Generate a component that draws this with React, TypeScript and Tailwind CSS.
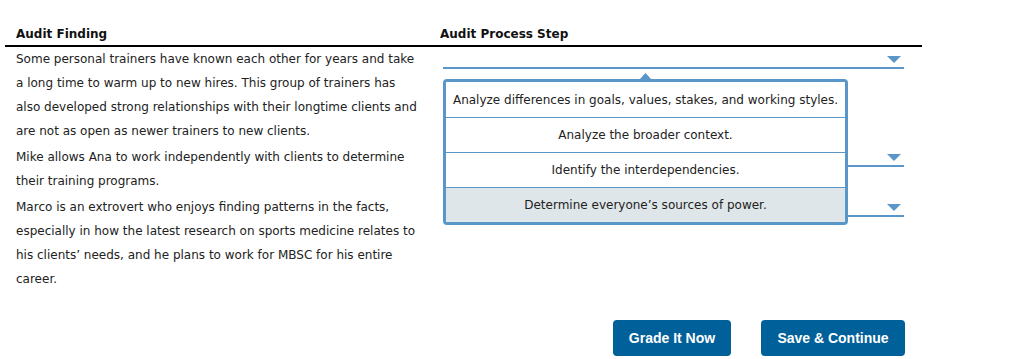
import { useState } from 'react';

const findings = [
  {
    text: 'Some personal trainers have known each other for years and take a long time to warm up to new hires. This group of trainers has also developed strong relationships with their longtime clients and are not as open as newer trainers to new clients.',
  },
  {
    text: 'Mike allows Ana to work independently with clients to determine their training programs.',
  },
  {
    text: 'Marco is an extrovert who enjoys finding patterns in the facts, especially in how the latest research on sports medicine relates to his clients\u2019 needs, and he plans to work for MBSC for his entire career.',
  },
];

const steps = [
  'Analyze differences in goals, values, stakes, and working styles.',
  'Analyze the broader context.',
  'Identify the interdependencies.',
  'Determine everyone\u2019s sources of power.',
];

function Arrow() {
  return (
    <svg width="14" height="7" viewBox="0 0 14 7" className="absolute right-[3px] top-[9px]">
      <polygon points="0,0 14,0 7,7" fill="#5b96c8" />
    </svg>
  );
}

function Dropdown({ open }: { open?: boolean }) {
  return (
    <div className="relative h-[22px] border-b-2 border-[#5b96c8]">
      <Arrow />
      {open && (
        <div className="absolute left-0 top-[32px] z-10 w-[405px]">
          <svg width="13" height="7" viewBox="0 0 13 7" className="absolute left-[196px] top-[-6px]">
            <polygon points="0,7 6.5,0 13,7" fill="#5b96c8" />
          </svg>
          <div className="rounded-[4px] border-[3px] border-[#5b96c8] bg-white">
            {steps.map((s, i) => (
              <div
                key={s}
                className={
                  'flex h-[35px] items-center justify-center text-[12px] text-[#222] ' +
                  (i > 0 ? 'border-t border-[#5b96c8] ' : '') +
                  (i === 3 ? 'bg-[#dfe6e9]' : 'bg-white')
                }
              >
                {s}
              </div>
            ))}
          </div>
        </div>
      )}
    </div>
  );
}

export default function App() {
  const [openRow] = useState(0);

  return (
    <div className="min-h-[359px] bg-white pt-[27px] text-[#222]" style={{ fontFamily: "'DejaVu Sans', Verdana, sans-serif" }}>
      <div className="ml-[5px] w-[917px]">
        <div className="grid grid-cols-[435px_1fr] border-b-2 border-black pb-[3px] text-[12px] font-bold leading-[15px] text-[#111]">
          <div className="pl-[11px]">Audit Finding</div>
          <div>Audit Process Step</div>
        </div>
        <div>
          {findings.map((f, i) => (
            <div key={i} className="mb-[2px] grid grid-cols-[438px_1fr]">
              <div className="pl-[11px] pr-[21px] text-[12px] leading-[24px]">{f.text}</div>
              <div className="pr-[18px]">
                <Dropdown open={openRow === i} />
              </div>
            </div>
          ))}
        </div>
        <div className="mt-[29px] flex justify-end gap-[30px] pr-[17px]" style={{ fontFamily: "'Liberation Sans', Arial, sans-serif" }}>
          <button className="h-[36px] w-[118px] rounded-[4px] bg-[#00609a] text-[14px] font-bold text-white">Grade It Now</button>
          <button className="h-[36px] w-[144px] rounded-[4px] bg-[#00609a] text-[14px] font-bold text-white">Save &amp; Continue</button>
        </div>
      </div>
    </div>
  );
}
